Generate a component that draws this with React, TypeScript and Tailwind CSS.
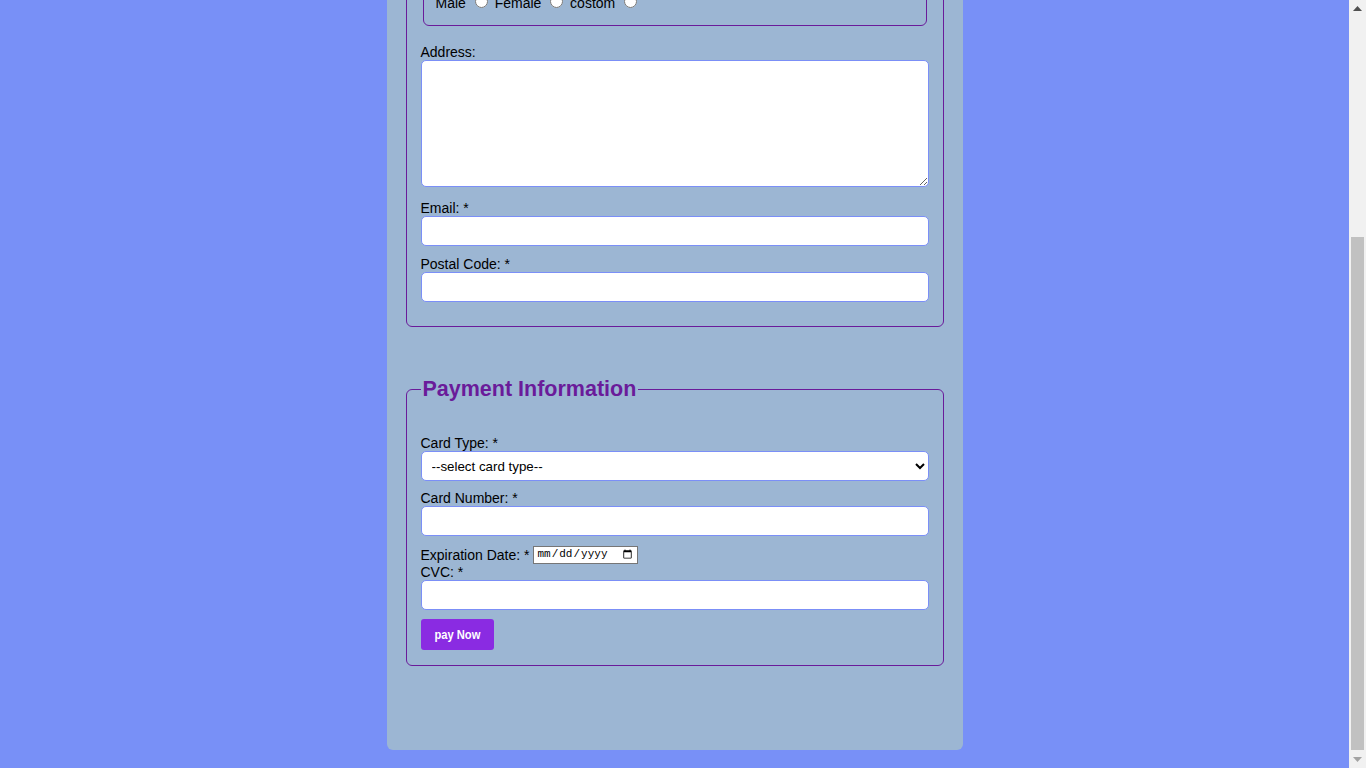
import React, { useLayoutEffect, useRef } from "react";

const font = { fontFamily: '"Liberation Sans", Arial, sans-serif' };

const labelCls = "block text-[14px] leading-[16px] text-black";
const inputCls =
  "block w-full h-[30px] mb-[9px] bg-white border border-[#7b8ff7] rounded-[5px] px-[6px] text-[13.33px] outline-none";

// the browser's classic scrollbar, as seen at the right edge of the page
const FakeScrollbar: React.FC = () => (
  <div className="flex h-screen w-[17px] shrink-0 flex-col bg-[#f1f1f1]">
    <div className="flex h-[17px] items-center justify-center">
      <svg width="9" height="5" viewBox="0 0 9 5">
        <polygon points="4.5,0 9,5 0,5" fill="#505050" />
      </svg>
    </div>
    <div className="h-[220px]" />
    <div className="mx-[2px] flex-1 bg-[#c1c1c1]" />
    <div className="flex h-[18px] items-center justify-center">
      <svg width="9" height="5" viewBox="0 0 9 5">
        <polygon points="0,0 9,0 4.5,5" fill="#a3a3a3" />
      </svg>
    </div>
  </div>
);

const App: React.FC = () => {
  const scroller = useRef<HTMLDivElement>(null);

  useLayoutEffect(() => {
    const el = scroller.current;
    if (el) el.scrollTop = el.scrollHeight;
  }, []);

  return (
    <div className="flex h-screen bg-[#7890f7]" style={font}>
      <div
        ref={scroller}
        className="h-screen flex-1 overflow-y-scroll [scrollbar-width:none]"
      >
        <div className="mx-auto mt-[18px] mb-[18px] w-[576px] rounded-[6px] bg-[#9cb6d3] px-[19px] pt-[20px] pb-[84px]">
          <h1 className="mb-[12px] text-center text-[28px] leading-[32px] font-bold text-[#6a1b9a]">
            Checkout Form
          </h1>

          <form onSubmit={(e) => e.preventDefault()}>
            <fieldset className="rounded-[6px] border border-[#6a1b9a] px-[14px] pb-[15px]">
              <legend className="px-[2px] text-[21.5px] leading-[25px] font-bold text-[#6a1b9a]">
                Personal Information
              </legend>
              <div className="pt-[33px]">
                <label className={labelCls} htmlFor="fname">
                  First Name: *
                </label>
                <input id="fname" type="text" className={inputCls} />
                <label className={labelCls} htmlFor="lname">
                  Last Name: *
                </label>
                <input id="lname" type="text" className={inputCls} />
                <label className={labelCls} htmlFor="phone">
                  Phone: *
                </label>
                <input id="phone" type="tel" className={inputCls} />

                <fieldset className="mx-[2px] mb-[18px] rounded-[6px] border border-[#6a1b9a] px-[12px] pb-[14px]">
                  <legend className="px-[2px] text-[14px] leading-[16px]">Gender: *</legend>
                  <div className="pt-[6px] text-[14px] leading-[16px] text-black">
                    Male{" "}
                    <input
                      type="radio"
                      name="gender"
                      className="mt-[3px] mr-[3px] ml-[5px]"
                    />{" "}
                    Female{" "}
                    <input
                      type="radio"
                      name="gender"
                      className="mt-[3px] mr-[3px] ml-[5px]"
                    />{" "}
                    costom{" "}
                    <input
                      type="radio"
                      name="gender"
                      className="mt-[3px] mr-[3px] ml-[5px]"
                    />
                  </div>
                </fieldset>

                <label className={labelCls} htmlFor="address">
                  Address:
                </label>
                <textarea
                  id="address"
                  className="block h-[127px] w-full mb-[13px] bg-white border border-[#7b8ff7] rounded-[5px] outline-none"
                />
                <label className={labelCls} htmlFor="email">
                  Email: *
                </label>
                <input id="email" type="email" className={inputCls + " !mb-[10px]"} />
                <label className={labelCls} htmlFor="postal">
                  Postal Code: *
                </label>
                <input id="postal" type="text" className={inputCls} />
              </div>
            </fieldset>

            <fieldset className="mt-[50px] rounded-[6px] border border-[#6a1b9a] px-[14px] pb-[15px]">
              <legend className="px-[2px] text-[21.5px] leading-[25px] font-bold text-[#6a1b9a]">
                Payment Information
              </legend>
              <div className="pt-[33px]">
                <label className={labelCls} htmlFor="ctype">
                  Card Type: *
                </label>
                <select id="ctype" className={inputCls + " text-black"}>
                  <option value="">--select card type--</option>
                  <option value="visa">Visa</option>
                  <option value="master">MasterCard</option>
                  <option value="amex">American Express</option>
                </select>
                <label className={labelCls} htmlFor="cnum">
                  Card Number: *
                </label>
                <input id="cnum" type="text" className={inputCls} />
                <div className="flex h-[19px] items-center">
                  <label className="text-[14px] leading-[16px] text-black" htmlFor="exp">
                    Expiration Date: *
                  </label>
                  <input
                    id="exp"
                    type="date"
                    className="ml-[4px] h-[18px] w-[105px] border border-[#767676] bg-white px-[2px] text-[11px] text-black outline-none"
                    style={{ fontFamily: '"Liberation Mono", monospace' }}
                  />
                </div>
                <label className={labelCls} htmlFor="cvc">
                  CVC: *
                </label>
                <input id="cvc" type="text" className={inputCls} />
                <button
                  type="submit"
                  className="block h-[31px] w-[73px] rounded-[3px] bg-[#8a2be2] text-[13.33px] font-bold text-white"
                >
                  <span className="inline-block scale-x-[0.84]">pay Now</span>
                </button>
              </div>
            </fieldset>
          </form>
        </div>
      </div>
      <FakeScrollbar />
    </div>
  );
};

export default App;
